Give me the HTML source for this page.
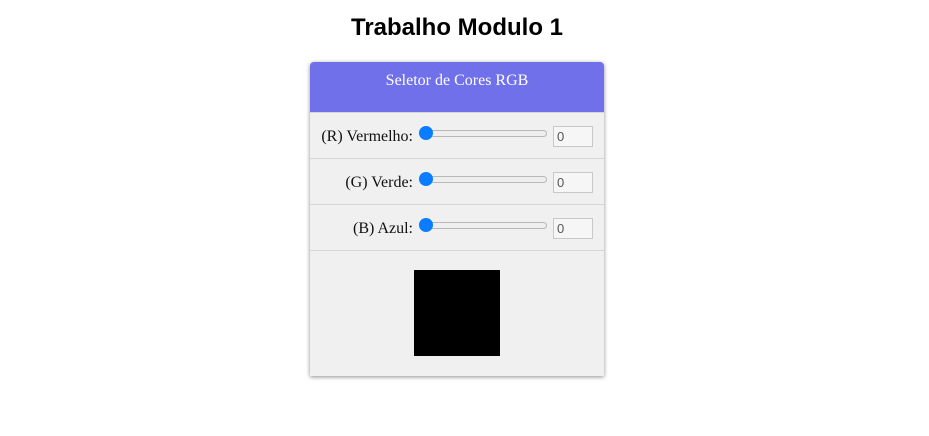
<!DOCTYPE html>
<html><head><style>
body{margin:0;background:#fff;font-family:"Liberation Serif",serif;width:929px;height:436px;position:relative;overflow:hidden}
h1{position:absolute;left:0;width:914px;top:14px;margin:0;text-align:center;font:bold 24px "Liberation Sans",sans-serif;color:#000}
.card{position:absolute;left:310px;top:62px;width:294px;height:314px;background:#f0f0f0;border-radius:4px 4px 0 0;box-shadow:0 1px 4px rgba(0,0,0,.45)}
.hd{height:50px;background:#7070ea;color:#fff;text-align:center;font-size:16px;line-height:38px;border-radius:4px 4px 0 0}
.row{position:absolute;left:0;width:294px;height:45px;border-bottom:1px solid #d6d6d6;border-top:1px solid #d6d6d6}
.lab{position:absolute;right:191px;top:15px;font-size:16px;color:#111;white-space:nowrap}
.tr{position:absolute;left:110px;top:17px;width:125px;height:5px;border:1px solid #b8b8b8;border-radius:4px;background:#eee}
.th{position:absolute;left:109px;top:13px;width:14px;height:14px;border-radius:50%;background:#0a7cff}
.in{position:absolute;left:243px;top:13px;border:1px solid #c8c8c8;background:#f6f6f6;font:13px "Liberation Sans",sans-serif;color:#555;line-height:20px;padding-left:3px;box-sizing:border-box;width:40px;height:21px}
.box{position:absolute;left:104px;top:208px;width:86px;height:86px;background:#000}
</style></head><body>
<h1>Trabalho Modulo 1</h1>
<div class="card">
<div class="hd">Seletor de Cores RGB</div>
<div class="row" style="top:50px"><span class="lab">(R) Vermelho:</span><div class="tr"></div><div class="th"></div><div class="in">0</div></div>
<div class="row" style="top:96px"><span class="lab">(G) Verde:</span><div class="tr"></div><div class="th"></div><div class="in">0</div></div>
<div class="row" style="top:142px"><span class="lab">(B) Azul:</span><div class="tr"></div><div class="th"></div><div class="in">0</div></div>
<div class="box"></div>
</div>
</body></html>
